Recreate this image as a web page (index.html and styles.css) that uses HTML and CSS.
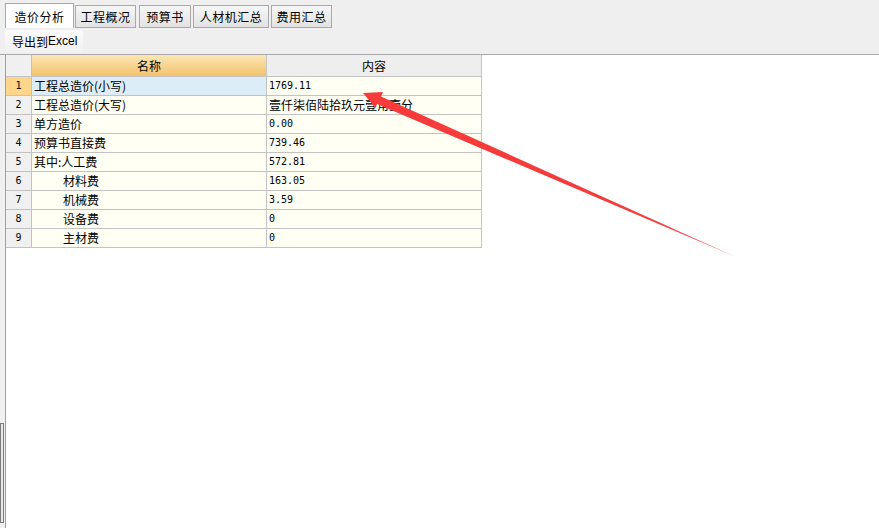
FILE: index.html
```html
<!DOCTYPE html>
<html lang="zh-CN">
<head>
<meta charset="utf-8">
<title>造价分析</title>
<link rel="stylesheet" href="styles.css">
</head>
<body>
<div class="top">
  <div class="tabs">
    <div class="tab tab-active">造价分析</div>
    <div class="tab tab-w61">工程概况</div>
    <div class="tab tab-w52">预算书</div>
    <div class="tab tab-w76">人材机汇总</div>
    <div class="tab tab-w61">费用汇总</div>
  </div>
  <div class="toolbar">
    <span class="btn">导出到<span class="latin">Excel</span></span>
  </div>
</div>
<div class="main">
  <div class="side"><div class="scroll"></div></div>
  <div class="content">
    <div class="grid">
      <div class="hd hd-num"></div>
      <div class="hd hd-name">名称</div>
      <div class="hd hd-val">内容</div>

      <div class="num num-active">1</div>
      <div class="name name-active">工程总造价(小写)</div>
      <div class="val">1769.11</div>

      <div class="num">2</div>
      <div class="name">工程总造价(大写)</div>
      <div class="val cjk">壹仟柒佰陆拾玖元壹角壹分</div>

      <div class="num">3</div>
      <div class="name">单方造价</div>
      <div class="val">0.00</div>

      <div class="num">4</div>
      <div class="name">预算书直接费</div>
      <div class="val">739.46</div>

      <div class="num">5</div>
      <div class="name">其中:人工费</div>
      <div class="val">572.81</div>

      <div class="num">6</div>
      <div class="name indent">材料费</div>
      <div class="val">163.05</div>

      <div class="num">7</div>
      <div class="name indent">机械费</div>
      <div class="val">3.59</div>

      <div class="num">8</div>
      <div class="name indent">设备费</div>
      <div class="val">0</div>

      <div class="num">9</div>
      <div class="name indent">主材费</div>
      <div class="val">0</div>
    </div>
  </div>
</div>
<svg class="arrow" width="879" height="528" viewBox="0 0 879 528">
  <defs>
    <linearGradient id="ag" x1="363" y1="93" x2="736" y2="257" gradientUnits="userSpaceOnUse">
      <stop offset="0" stop-color="#f83a3a"/>
      <stop offset="0.8" stop-color="#f63c3c"/>
      <stop offset="1" stop-color="#ff8080"/>
    </linearGradient>
  </defs>
  <polygon points="363,93 383,92 381,96.5 736,257 377,104 375.5,108" fill="url(#ag)"/>
</svg>
</body>
</html>
```
FILE: styles.css
```css
html, body {
  margin: 0;
  padding: 0;
  background: #ffffff;
}
body {
  width: 879px;
  height: 528px;
  overflow: hidden;
  position: relative;
  font-family: "Noto Sans CJK SC", "Liberation Sans", sans-serif;
  font-size: 12px;
  color: #000;
}
.top {
  background: #efefef;
  border-bottom: 1px solid #a9a9ad;
}
.tabs {
  display: flex;
  align-items: flex-end;
  height: 28px;
  padding-left: 5px;
  box-sizing: border-box;
}
.tab {
  box-sizing: border-box;
  height: 23px;
  border: 1px solid #a9a9a9;
  background: linear-gradient(#f6f6f6, #e3e3e3);
  display: flex;
  align-items: center;
  justify-content: center;
  font-size: 12px;
  letter-spacing: 0.5px;
  margin-left: 2px;
}
.tab-active {
  width: 69px;
  height: 25px;
  margin-left: 0;
  background: #ffffff;
  border-bottom: none;
  padding-top: 1px;
  margin-bottom: 0;
}
.tab-w61 { width: 61px; }
.tab-w52 { width: 52px; margin-left: 3px; }
.tab-w76 { width: 76px; }
.tab-active + .tab { margin-left: 1px; }
.toolbar {
  height: 26px;
  display: flex;
  align-items: center;
  padding-left: 5px;
}
.btn {
  display: inline-flex;
  align-items: center;
  height: 22px;
  padding: 0 6px 0 7px;
  background: linear-gradient(#fafafa, #f1f1f1);
  font-size: 12px;
}
.latin {
  font-family: "Liberation Sans", sans-serif;
  font-size: 12px;
}
.main {
  display: flex;
  height: 473px;
}
.side {
  width: 5px;
  background: #f0f0f0;
  border-right: 1px solid #a0a0a0;
  display: flex;
  flex-direction: column;
  justify-content: flex-end;
}
.scroll {
  width: 2px;
  height: 98px;
  border: 1px solid #7c7c7c;
  background: #e8e8e8;
  margin-bottom: 5px;
}
.content {
  flex: 1;
  background: #ffffff;
}
.grid {
  display: grid;
  grid-template-columns: 26px 235px 215px;
  grid-template-rows: 22px repeat(9, 19px);
}
.grid > div {
  box-sizing: border-box;
  border-right: 1px solid #c3c3c3;
  border-bottom: 1px solid #c3c3c3;
  line-height: 18px;
  white-space: nowrap;
  overflow: hidden;
}
.hd {
  text-align: center;
  line-height: 21px !important;
}
.hd-num { background: #f0f0f0; }
.hd-name { background: linear-gradient(#fbe6b6, #f4c36c); }
.hd-val { background: #eeeeee; }
.num {
  background: #f0f0f0;
  text-align: center;
  font-family: "DejaVu Sans Mono", "Liberation Mono", monospace;
  font-size: 10px;
}
.num-active { background: #fdd68c; }
.name {
  background: #fffff4;
  padding-left: 2px;
}
.name-active { background: #ddedf8; }
.indent { padding-left: 31px; }
.val {
  background: #fffff4;
  padding-left: 2px;
  font-family: "DejaVu Sans Mono", "Liberation Mono", monospace;
  font-size: 10px;
}
.val.cjk {
  font-family: "Noto Sans CJK SC", sans-serif;
  font-size: 12px;
}
.arrow {
  position: absolute;
  left: 0;
  top: 0;
  pointer-events: none;
}
```
